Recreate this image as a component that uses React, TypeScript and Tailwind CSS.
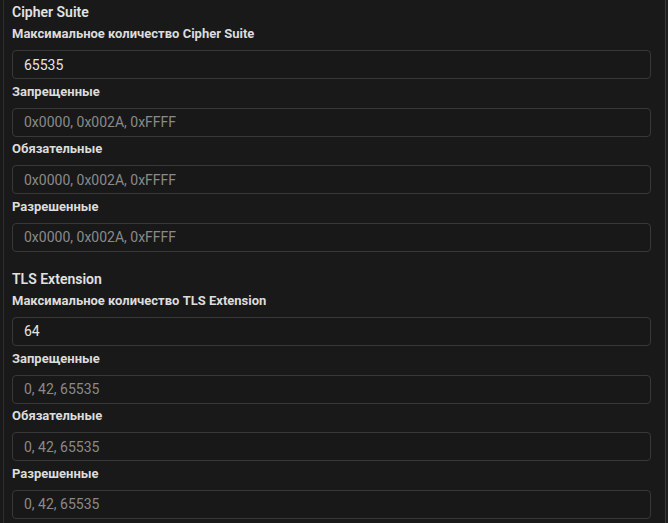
import React from "react";

type Field = {
  label: string;
  value?: string;
  placeholder?: string;
};

type Section = {
  title: string;
  fields: Field[];
};

const sections: Section[] = [
  {
    title: "Cipher Suite",
    fields: [
      { label: "Максимальное количество Cipher Suite", value: "65535" },
      { label: "Запрещенные", placeholder: "0x0000, 0x002A, 0xFFFF" },
      { label: "Обязательные", placeholder: "0x0000, 0x002A, 0xFFFF" },
      { label: "Разрешенные", placeholder: "0x0000, 0x002A, 0xFFFF" },
    ],
  },
  {
    title: "TLS Extension",
    fields: [
      { label: "Максимальное количество TLS Extension", value: "64" },
      { label: "Запрещенные", placeholder: "0, 42, 65535" },
      { label: "Обязательные", placeholder: "0, 42, 65535" },
      { label: "Разрешенные", placeholder: "0, 42, 65535" },
    ],
  },
];

const FieldRow = ({ field }: { field: Field }) => (
  <div className="flex flex-col">
    <label className="text-[13px] leading-[16px] font-bold text-[#dcdcdc]">
      {field.label}
    </label>
    <input
      className="mt-[8px] h-[29px] w-full rounded-[4px] border border-[#383838] bg-[#181818] px-[11px] text-[14px] text-[#e4e4e4] placeholder:text-[#8a8a8a] outline-none"
      defaultValue={field.value}
      placeholder={field.placeholder}
    />
  </div>
);

export default function App() {
  return (
    <div
      className="h-[523px] w-full overflow-hidden bg-[#191919] pl-[3px]"
      style={{ fontFamily: "Roboto, 'Noto Sans', sans-serif" }}
    >
      <div className="flex h-full border-l border-[#2e2e2e]">
        <div className="flex flex-1 flex-col gap-[17px] pl-[8px] pr-[14px] pt-[2px]">
          {sections.map((s) => (
            <div key={s.title} className="flex flex-col">
              <h2 className="text-[14px] leading-[20px] font-semibold text-[#e2e2e2]">
                {s.title}
              </h2>
              <div className="mt-[4px] flex flex-col gap-[4.67px]">
                {s.fields.map((f, i) => (
                  <FieldRow key={i} field={f} />
                ))}
              </div>
            </div>
          ))}
        </div>
        <div className="w-[3px] border-l border-[#3a3a3a] bg-[#1e1e1e]" />
      </div>
    </div>
  );
}
